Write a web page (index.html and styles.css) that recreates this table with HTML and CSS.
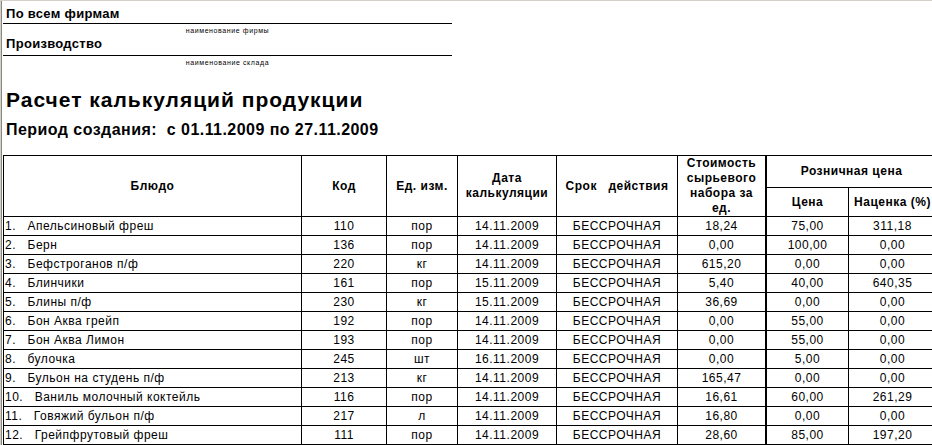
FILE: index.html
```html
<!DOCTYPE html>
<html lang="ru">
<head>
<meta charset="utf-8">
<title>Расчет калькуляций продукции</title>
<link rel="stylesheet" href="styles.css">
</head>
<body>
<div class="window">
  <div class="sheet">
    <div class="meta">
      <div class="meta-value meta-first">По всем фирмам</div>
      <div class="meta-caption">наименование фирмы</div>
      <div class="meta-value meta-second">Производство</div>
      <div class="meta-caption">наименование склада</div>
    </div>
    <h1 class="title">Расчет калькуляций продукции</h1>
    <h2 class="period">Период создания:  с 01.11.2009 по 27.11.2009</h2>
    <table class="report">
      <colgroup>
        <col class="c-name">
        <col class="c-code">
        <col class="c-unit">
        <col class="c-date">
        <col class="c-term">
        <col class="c-cost">
        <col class="c-price">
        <col class="c-markup">
      </colgroup>
      <thead>
        <tr class="head-top">
          <th rowspan="2">Блюдо</th>
          <th rowspan="2">Код</th>
          <th rowspan="2">Ед. изм.</th>
          <th rowspan="2">Дата<br>калькуляции</th>
          <th rowspan="2" class="pre">Срок   действия</th>
          <th rowspan="2" class="thick">Стоимость<br>сырьевого<br>набора за<br>ед.</th>
          <th colspan="2">Розничная цена</th>
        </tr>
        <tr class="head-sub">
          <th>Цена</th>
          <th>Наценка (%)</th>
        </tr>
      </thead>
      <tbody>
        <tr><td class="name">1.   Апельсиновый фреш</td><td>110</td><td>пор</td><td>14.11.2009</td><td>БЕССРОЧНАЯ</td><td class="thick">18,24</td><td>75,00</td><td>311,18</td></tr>
        <tr><td class="name">2.   Берн</td><td>136</td><td>пор</td><td>14.11.2009</td><td>БЕССРОЧНАЯ</td><td class="thick">0,00</td><td>100,00</td><td>0,00</td></tr>
        <tr><td class="name">3.   Бефстроганов п/ф</td><td>220</td><td>кг</td><td>14.11.2009</td><td>БЕССРОЧНАЯ</td><td class="thick">615,20</td><td>0,00</td><td>0,00</td></tr>
        <tr><td class="name">4.   Блинчики</td><td>161</td><td>пор</td><td>15.11.2009</td><td>БЕССРОЧНАЯ</td><td class="thick">5,40</td><td>40,00</td><td>640,35</td></tr>
        <tr><td class="name">5.   Блины п/ф</td><td>230</td><td>кг</td><td>15.11.2009</td><td>БЕССРОЧНАЯ</td><td class="thick">36,69</td><td>0,00</td><td>0,00</td></tr>
        <tr><td class="name">6.   Бон Аква грейп</td><td>192</td><td>пор</td><td>14.11.2009</td><td>БЕССРОЧНАЯ</td><td class="thick">0,00</td><td>55,00</td><td>0,00</td></tr>
        <tr><td class="name">7.   Бон Аква Лимон</td><td>193</td><td>пор</td><td>14.11.2009</td><td>БЕССРОЧНАЯ</td><td class="thick">0,00</td><td>55,00</td><td>0,00</td></tr>
        <tr><td class="name">8.   булочка</td><td>245</td><td>шт</td><td>16.11.2009</td><td>БЕССРОЧНАЯ</td><td class="thick">0,00</td><td>5,00</td><td>0,00</td></tr>
        <tr><td class="name">9.   Бульон на студень п/ф</td><td>213</td><td>кг</td><td>14.11.2009</td><td>БЕССРОЧНАЯ</td><td class="thick">165,47</td><td>0,00</td><td>0,00</td></tr>
        <tr><td class="name">10.   Ваниль молочный коктейль</td><td>116</td><td>пор</td><td>14.11.2009</td><td>БЕССРОЧНАЯ</td><td class="thick">16,61</td><td>60,00</td><td>261,29</td></tr>
        <tr><td class="name">11.   Говяжий бульон п/ф</td><td>217</td><td>л</td><td>14.11.2009</td><td>БЕССРОЧНАЯ</td><td class="thick">16,80</td><td>0,00</td><td>0,00</td></tr>
        <tr><td class="name">12.   Грейпфрутовый фреш</td><td>111</td><td>пор</td><td>14.11.2009</td><td>БЕССРОЧНАЯ</td><td class="thick">28,60</td><td>85,00</td><td>197,20</td></tr>
        <tr><td class="name"></td><td></td><td></td><td></td><td></td><td class="thick"></td><td></td><td></td></tr>
      </tbody>
    </table>
  </div>
</div>
</body>
</html>
```
FILE: styles.css
```css
html, body {
  margin: 0;
  padding: 0;
  background: #ffffff;
  overflow: hidden;
}

body {
  font-family: "Liberation Sans", Arial, sans-serif;
  color: #000000;
  width: 932px;
  height: 445px;
}

.window {
  border-left: 1px solid #d4d0c8;
  border-top: 1px solid #d4d0c8;
  height: 444px;
}

.sheet {
  border-left: 1px solid #8a8782;
  padding-left: 1px;
  height: 444px;
}

.meta {
  width: 449px;
}

.meta-value {
  font-size: 13px;
  font-weight: bold;
  line-height: 15px;
  padding-left: 3px;
  border-bottom: 1px solid #000000;
  letter-spacing: 0.3px;
}

.meta-first {
  padding-top: 5px;
  padding-bottom: 2px;
}

.meta-second {
  padding-top: 1px;
  padding-bottom: 4px;
}

.meta-caption {
  font-size: 7px;
  line-height: 8px;
  padding-top: 3px;
  height: 8px;
  text-align: center;
  letter-spacing: 0.6px;
}

.title {
  margin: 21px 0 0 0;
  padding-left: 3px;
  font-size: 21px;
  line-height: 24px;
  font-weight: bold;
  letter-spacing: 1px;
}

.period {
  margin: 9px 0 0 0;
  padding-left: 3px;
  font-size: 16px;
  line-height: 18px;
  font-weight: bold;
  white-space: pre;
  letter-spacing: 0.45px;
}

.report {
  margin-top: 16px;
  border-collapse: separate;
  border-spacing: 0;
  table-layout: fixed;
  width: 934px;
  border-left: 1px solid #000000;
  border-top: 1px solid #000000;
  font-size: 12px;
  letter-spacing: 0.5px;
}

.c-name { width: 298px; }
.c-code { width: 85px; }
.c-unit { width: 71px; }
.c-date { width: 99px; }
.c-term { width: 121px; }
.c-cost { width: 89px; }
.c-price { width: 82px; }
.c-markup { width: 88px; }

.report th,
.report td {
  box-sizing: border-box;
  border-right: 1px solid #000000;
  border-bottom: 1px solid #000000;
  padding: 0;
  text-align: center;
  vertical-align: middle;
  white-space: nowrap;
  overflow: hidden;
}

.report th {
  font-weight: bold;
  line-height: 15px;
}

.report .thick {
  border-right-width: 2px;
}

.report .pre {
  white-space: pre;
}

.head-top th {
  height: 32px;
}

.head-sub th {
  height: 29px;
}

.report td {
  height: 19px;
  line-height: 18px;
}

.report td.name {
  text-align: left;
  white-space: pre;
  padding-left: 1px;
}
```
